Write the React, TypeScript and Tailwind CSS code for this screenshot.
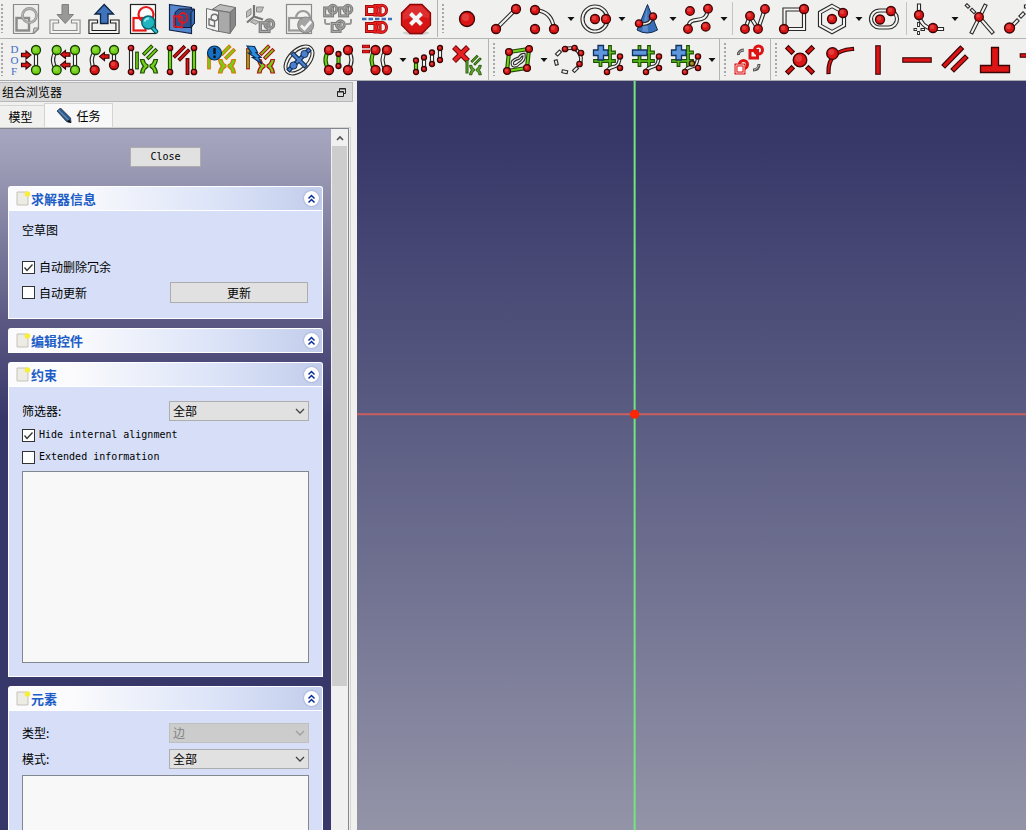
import { useState } from "react"
import type { ReactNode } from "react"

const RED = "#dc1414"
const GREEN = "#73d216"
const WHITE = "#f4f4f2"
const INK = "#2a2a2a"

/* ---------- drawing primitives for the 32x32 toolbar icons ---------- */

function Dot({ x, y, r = 4, c = RED }: { x: number; y: number; r?: number; c?: string }) {
  return (
    <g>
      <circle cx={x} cy={y} r={r} fill={c} stroke={c === GREEN ? "#173d02" : "#3a0505"} strokeWidth="1.3" />
      <circle cx={x - r * 0.2} cy={y - r * 0.25} r={r * 0.5} fill="#fff" opacity="0.18" />
    </g>
  )
}

// a stroke with a thin outline round it
function Bar({ d, c = WHITE, w = 2, o = INK }: { d: string; c?: string; w?: number; o?: string }) {
  return (
    <g fill="none">
      <path d={d} stroke={o} strokeWidth={w + 2.2} strokeLinecap="square" />
      <path d={d} stroke={c} strokeWidth={w} strokeLinecap="square" />
    </g>
  )
}

// small square + ring
function Pair({ x, y, s = 1 }: { x: number; y: number; s?: number }) {
  return (
    <g transform={`translate(${x} ${y}) scale(${s})`} fill="none">
      <g stroke="#7c7c7c" strokeWidth="4.6">
        <rect x="2.5" y="6" width="12" height="12" />
        <circle cx="15" cy="8" r="6" />
      </g>
      <g stroke="#b2b2b2" strokeWidth="1.2">
        <rect x="2.5" y="6" width="12" height="12" />
        <circle cx="15" cy="8" r="6" />
      </g>
    </g>
  )
}

function Arrow({ x, y, flip = false }: { x: number; y: number; flip?: boolean }) {
  return (
    <path
      transform={`translate(${x} ${y})${flip ? " scale(-1 1)" : ""}`}
      d="M-4.5 -1.7H0V-4L5 0L0 4V1.7H-4.5Z"
      fill={RED}
      stroke="#3a0505"
      strokeWidth="1.1"
    />
  )
}

function Marks({ c = GREEN, o = "#1f4d05" }: { c?: string; o?: string }) {
  return (
    <g>
      <Bar d="M17.5 9.5L24 3" c={c} o={o} w={1.6} />
      <Bar d="M21.5 13.5L28.5 6.5" c={c} o={o} w={1.6} />
      <path d="M13.5 15.5H17C17.5 18.5 19 20 21 21V23C19 24 17.5 26 17 29H13.5C14 26 15 23.5 16.500 22.2C15 21 14 18.500 13.5 15.5Z" fill={c} stroke={o} strokeWidth="1.2" />
      <path d="M30.5 15.5H27C26.500 18.500 25 20 23 21V23C25 24 26.500 26 27 29H30.5C30 26 29 23.5 27.5 22.2C29 21 30 18.5 30.5 15.5Z" fill={c} stroke={o} strokeWidth="1.2" />
    </g>
  )
}

function Tray({ c }: { c: string }) {
  return <Bar d="M8 18.5H2.5V29H29.5V18.5H24" o={c} w={2} />
}

function Grid() {
  return (
    <g>
      <Bar d="M8.5 3V21M18 3V21M3 8.5H22M3 17H22" c="#5fc21a" o="#1f4d05" w={1.6} />
      <Bar d="M15 27C20 19 26 28 28 13" w={1.6} />
      <Dot x={28} y={12.5} r={2.6} />
      <Dot x={15} y={28} r={2.6} />
      <Dot x={28} y={24} r={2.6} />
    </g>
  )
}

const BLUE_PLUS = "M6 1.5H11.5V6H16V11.5H11.5V16H6V11.5H1.5V6H6Z"

const icons: Record<string, ReactNode> = {
  newSketch: (
    <g>
      <path d="M3.5 1.5H28.5V26L24 30.5H3.5Z" fill="#eeeeec" stroke="#8a8a8a" strokeWidth="1.2" />
      <path d="M28.5 25L23 30.5L24 25Z" fill="#ccc" stroke="#888" />
      <g fill="none">
        <rect x="6.5" y="15" width="12.5" height="12.5" stroke="#8b8b8b" strokeWidth="2.4" />
        <circle cx="19.5" cy="12.5" r="7" stroke="#999" strokeWidth="2.8" />
        <circle cx="19.5" cy="12.5" r="7" stroke="#c8c8c8" strokeWidth="0.8" />
      </g>
    </g>
  ),
  importFile: (
    <g>
      <Tray c="#8b8b8b" />
      <path d="M13 1.5H19.5V11.5H24.5L16.2 20.5L8 11.5H13Z" fill="#999" stroke="#808080" />
    </g>
  ),
  exportFile: (
    <g>
      <Tray c="#1c1c1c" />
      <path d="M12.5 20.5V11H7L16.2 1.5L25.5 11H20V20.5Z" fill="#3f74bd" stroke="#0d2345" strokeWidth="1.3" />
    </g>
  ),
  viewSketch: (
    <g>
      <rect x="3.5" y="1.5" width="25" height="29" fill="#fafafa" stroke="#222" strokeWidth="1.2" />
      <g fill="none" stroke="#e61818" strokeWidth="2.2">
        <rect x="6.5" y="15" width="12" height="12.5" />
        <circle cx="19" cy="11.5" r="7.5" />
      </g>
      <path d="M25 24L29 28.5" stroke="#064c55" strokeWidth="4.5" strokeLinecap="round" />
      <path d="M25 24L29 28.5" stroke="#22c0ce" strokeWidth="2.4" strokeLinecap="round" />
      <circle cx="21.3" cy="19.5" r="6.5" fill="#21b5c0" stroke="#0a6873" strokeWidth="1.5" />
      <path d="M17.5 18.5A4.5 4.5 0 0 1 22 15.5" stroke="#9cecf0" strokeWidth="1.8" fill="none" />
    </g>
  ),
  viewSection: (
    <g>
      <path d="M3.5 1.5L25.5 4.5V30.5L3.5 27Z" fill="#5686cc" stroke="#10264c" strokeWidth="1.2" />
      <path d="M9 9.5L13 6H28.5V20L25 24.5H9Z" fill="#2c5190" stroke="#0b1b38" />
      <path d="M25 9.5L28.5 6V20L25 24.5Z" fill="#3c6fb8" stroke="#0b1b38" />
      <g fill="none" stroke="#e61818" strokeWidth="1.8">
        <path d="M8 13L16 14V24.5L8 23.5Z" />
        <ellipse cx="17" cy="15" rx="4.3" ry="5" />
      </g>
    </g>
  ),
  mapSketch: (
    <g stroke="#707070">
      <path d="M7 6.5L15 1.5L30.5 4.5L25 9.5Z" fill="#bcbcbc" />
      <path d="M25 9.5L30.5 4.5V22.5L25 30.5Z" fill="#888" />
      <path d="M7 6.5L25 9.5V30.5L7 27Z" fill="#a9a9a9" />
      <path d="M1.5 5.5L13.5 8.5V28.5L1.5 25Z" fill="#f4f4f4" />
      <path d="M4 16L9.500 17.500V23.5L4 22Z" fill="none" strokeWidth="1.4" />
      <circle cx="9.5" cy="14.5" r="3.3" fill="none" strokeWidth="1.4" />
    </g>
  ),
  reorient: (
    <g>
      <path d="M12.5 4H19.5L17.5 9H12.500Z" fill="#bdbdbd" stroke="#8c8c8c" />
      <path d="M2.5 8.5L7 5.5V11.5L2.5 14.5Z" fill="#bdbdbd" stroke="#8c8c8c" />
      <path d="M6.5 19L9.5 16.5L15 18.500L12 21.500Z" fill="#bdbdbd" stroke="#8c8c8c" />
      <path d="M10 2V13.500L3 19.5M10 13.500L19 16.500" stroke="#757575" strokeWidth="2.2" fill="none" />
      <Pair x={14.5} y={15.5} s={0.72} />
    </g>
  ),
  validate: (
    <g>
      <rect x="3.5" y="1.5" width="25" height="29" fill="#f2f2f0" stroke="#8a8a8a" strokeWidth="1.2" />
      <g fill="none" stroke="#999" strokeWidth="2.2">
        <rect x="6" y="15" width="13" height="12.5" />
        <path d="M13 15A7 7 0 1 1 27 15" />
      </g>
      <circle cx="22.7" cy="22" r="8" fill="#a4a4a4" stroke="#848484" />
      <path d="M18 22.500L21.5 26L28 18.5" stroke="#f4f4f4" strokeWidth="2.8" fill="none" />
    </g>
  ),
  merge: (
    <g>
      <Pair x={1} y={1} s={0.66} />
      <Pair x={16} y={1} s={0.66} />
      <Pair x={8.5} y={16.5} s={0.66} />
      <path d="M3 16V19Q3 21 5 21H8M29 16V19Q29 21 27 21H24" stroke="#999" strokeWidth="2" fill="none" />
    </g>
  ),
  mirror: (
    <g fill="none">
      <g stroke="#8d0606" strokeWidth="3">
        <path d="M5.5 3.5H14V11.5H5.5ZM14 2.5H19V12H14ZM5.5 20.5H14V28.500H5.5ZM14 19.5H19V29H14Z" />
        <circle cx="20.5" cy="7.2" r="5" />
        <circle cx="20.5" cy="24.3" r="5" />
      </g>
      <g stroke="#ee2020" strokeWidth="1.7">
        <path d="M5.5 3.5H14V11.5H5.5ZM14 2.5H19V12H14ZM5.5 20.5H14V28.500H5.5ZM14 19.5H19V29H14Z" />
        <circle cx="20.5" cy="7.2" r="5" />
        <circle cx="20.5" cy="24.3" r="5" />
      </g>
      <path d="M1 16H31" stroke="#3f70bd" strokeWidth="2.4" strokeDasharray="4.5 2" />
    </g>
  ),
  stop: (
    <g>
      <ellipse cx="16" cy="30" rx="13" ry="2" fill="#ccc" />
      <path d="M10 1.5H22L30.5 10V22L22 30.5H10L1.5 22V10Z" fill="#d81414" stroke="#8c0808" strokeWidth="1.3" />
      <path d="M10.5 2.8H21.5L29 10.5V15Q16 12 3 17V10.5Z" fill="#fff" opacity="0.12" />
      <path d="M10.5 10.5L21.5 21.5M21.5 10.5L10.5 21.5" stroke="#f7f7f7" strokeWidth="4" />
    </g>
  ),
  point: <Dot x={16} y={16} r={7.5} />,
  line: (
    <g>
      <Bar d="M6 26L26 6" />
      <Dot x={6} y={26} r={4.5} />
      <Dot x={26} y={6} r={4.5} />
    </g>
  ),
  arc: (
    <g>
      <Bar d="M6 7Q23 8 25 26" />
      <Dot x={6} y={7} r={4.5} />
      <Dot x={25} y={26} r={4.5} />
      <Dot x={6} y={26} r={4.5} />
    </g>
  ),
  circle: (
    <g>
      <g fill="none">
        <circle cx="15" cy="16" r="12.5" stroke={INK} strokeWidth="4.2" />
        <circle cx="15" cy="16" r="12.5" stroke={WHITE} strokeWidth="2" />
      </g>
      <Dot x={15} y={16} r={4.5} />
      <Dot x={26} y={16} r={4.5} />
    </g>
  ),
  conic: (
    <g>
      <path d="M16.5 1.5L26.5 27Q16 33 6 27Z" fill="#396eb8" stroke="#112b50" />
      <path d="M16 4L17 29L11 28.5Z" fill="#8fb4e4" opacity="0.45" />
      <Bar d="M9 21Q20 22 21 14" w={1.6} />
      <Dot x={8} y={20.5} r={3.6} />
      <Dot x={22} y={13.5} r={3.6} />
    </g>
  ),
  bspline: (
    <g>
      <Bar d="M6 26C7 9 24 25 26 6" />
      <Dot x={8} y={8} r={4.3} />
      <Dot x={26} y={5.7} r={4.3} />
      <Dot x={6} y={26} r={4.3} />
      <Dot x={23.7} y={23.7} r={4.3} />
    </g>
  ),
  polyline: (
    <g>
      <Bar d="M6 26L11 13L19 26L26 6" />
      <Dot x={6} y={26} r={4.3} />
      <Dot x={11} y={13} r={4.3} />
      <Dot x={19} y={26} r={4.3} />
      <Dot x={26} y={6} r={4.3} />
    </g>
  ),
  rect: (
    <g>
      <Bar d="M6.5 6.5H26V26H6.5Z" />
      <Dot x={26} y={6} r={4.5} />
      <Dot x={6} y={26} r={4.5} />
    </g>
  ),
  polygon: (
    <g>
      <Bar d="M15 3L27 9.5V22.5L15 29L3 22.5V9.5Z" />
      <Dot x={15} y={16} r={4.5} />
      <Dot x={26} y={10} r={4.5} />
    </g>
  ),
  slot: (
    <g>
      <g fill="none">
        <rect x="3" y="7.5" width="26" height="17" rx="8.5" stroke={INK} strokeWidth="4.2" />
        <rect x="3" y="7.5" width="26" height="17" rx="8.5" stroke={WHITE} strokeWidth="2" />
      </g>
      <Dot x={12} y={16.5} r={4.5} />
      <Dot x={23} y={8} r={4.5} />
    </g>
  ),
  fillet: (
    <g>
      <Bar d="M6 2.5V12Q8 24 20 26H29" />
      <g fill="none">
        <path d="M5.5 19V24M5.5 28V32M0.5 26.500H4M7.5 26.5H12" stroke={INK} strokeWidth="2.8" />
        <path d="M5.5 20V23M5.5 29V31M1.5 26.5H3.500M8.5 26.5H11" stroke="#f4f4f2" strokeWidth="1" />
      </g>
      <Dot x={6} y={12} r={4.5} />
      <Dot x={20} y={25} r={4.5} />
    </g>
  ),
  trim: (
    <g>
      <Bar d="M21 3L8 29" />
      <Bar d="M15 14L28 29" />
      <Bar d="M3 2.5L4 3.5M8 7L10 9" w={1.5} />
      <Dot x={15} y={14} r={4.3} />
    </g>
  ),
  extend: (
    <g>
      <Bar d="M7 25L14 18M18 13L20 11M23 3.5H28" />
      <Dot x={6.5} y={25} r={5} />
    </g>
  ),
  dof: (
    <g>
      <g fill="#3f6fc8" fontFamily="Liberation Serif, serif" fontSize="11">
        <text x="0.5" y="9">D</text>
        <text x="0.5" y="19.5">O</text>
        <text x="1" y="30.5">F</text>
      </g>
      <Bar d="M26 6V26" />
      <Arrow x={16} y={11} />
      <Arrow x={16} y={21} />
      <Dot x={26} y={6} r={4.5} c={GREEN} />
      <Dot x={26} y={26} r={4.5} c={GREEN} />
    </g>
  ),
  coincidentPairs: (
    <g>
      <Bar d="M8 6Q0 16 8 26" />
      <Bar d="M26 6V26" />
      <Arrow x={16.5} y={10.5} flip />
      <Arrow x={16.5} y={21} flip />
      <Dot x={7.7} y={6} r={4.5} c={GREEN} />
      <Dot x={26} y={6} r={4.5} c={GREEN} />
      <Dot x={7.7} y={26} r={4.5} c={GREEN} />
      <Dot x={26} y={26} r={4.5} c={GREEN} />
    </g>
  ),
  redundantPairs: (
    <g>
      <Bar d="M8 6Q0 16 7 26" />
      <Bar d="M26 6V21" />
      <Arrow x={16.5} y={12.5} flip />
      <Dot x={7.7} y={6} r={4.5} c={GREEN} />
      <Dot x={26} y={6} r={4.5} c={GREEN} />
      <Dot x={26} y={21} r={4.5} />
      <Dot x={6.7} y={26} r={4.5} />
    </g>
  ),
  selectConstraints: (
    <g>
      <Bar d="M4 4V28" />
      <Bar d="M10 9.500V23.5" c={GREEN} o="#1f4d05" w={1.6} />
      <Marks />
      <Dot x={4} y={4} r={2.7} />
      <Dot x={4} y={28} r={2.7} />
    </g>
  ),
  selectElements: (
    <g>
      <Bar d="M4 4V28M28 4V28" c={GREEN} o="#1f4d05" />
      <Bar d="M9 12L17.500 3.5M14 15L22 7M21.5 16V29" c={RED} o="#5c0505" w={1.6} />
      <Dot x={4} y={4} r={2.7} />
      <Dot x={28} y={4} r={2.7} />
      <Dot x={4} y={28} r={2.7} />
      <Dot x={28} y={28} r={2.7} />
    </g>
  ),
  selectRedundant: (
    <g>
      <Bar d="M4 12V23.500" c={GREEN} o="#d87808" w={1.6} />
      <Marks o="#d87808" />
      <circle cx="9.5" cy="9" r="7" fill="#1470c4" stroke="#0b2c50" strokeWidth="1.2" />
      <path d="M9.5 4V10M9.5 11.5V14" stroke="#111" strokeWidth="2.4" />
    </g>
  ),
  selectConflicting: (
    <g>
      <Bar d="M4 6V23.500" c={GREEN} o="#a81616" w={1.6} />
      <Marks o="#b41414" />
      <path d="M3 2L10.5 2.500L13.5 8.500H12L17 13.500H14.5L18 20L8.5 13.5H11L4.5 9H7.5Z" fill="#2a8de0" stroke="#0c2c58" strokeWidth="1.2" />
    </g>
  ),
  internalGeometry: (
    <g>
      <g transform="rotate(-45 16 16)" fill="none">
        <ellipse cx="16" cy="16" rx="16.5" ry="9.5" stroke={INK} strokeWidth="4" />
        <ellipse cx="16" cy="16" rx="16.5" ry="9.5" stroke={WHITE} strokeWidth="1.8" />
      </g>
      <Bar d="M6.500 25.500L25.500 6.5M10.5 10.5L21.5 21.5" c="#4b80cc" o="#12305c" w={2.4} />
      <circle cx="21.500" cy="10" r="3.600" fill="#4b80cc" stroke="#12305c" />
      <circle cx="10.500" cy="21.500" r="3.600" fill="#4b80cc" stroke="#12305c" />
    </g>
  ),
  symmetry: (
    <g>
      <Bar d="M7 6Q0 16 7 26" c={GREEN} o="#1f4d05" />
      <Bar d="M26 6Q33 16 26 26" />
      <Bar d="M16.5 10V22" c={GREEN} o="#1f4d05" />
      <Dot x={7} y={6} r={4.5} />
      <Dot x={26} y={6} r={4.5} />
      <Dot x={7} y={26} r={4.5} />
      <Dot x={26} y={26} r={4.5} />
      <Dot x={16.5} y={10} r={2.5} />
      <Dot x={16.5} y={22} r={2.5} />
    </g>
  ),
  clone: (
    <g>
      <path d="M1 2.5H9M1 7.5H9" stroke="#8c0808" strokeWidth="3.6" />
      <path d="M2 2.5H8M2 7.5H8" stroke="#e61818" strokeWidth="1.8" />
      <Bar d="M14 6Q7 16 14 26" c={GREEN} o="#1f4d05" />
      <Bar d="M25 6Q18 16 25 26" />
      <Dot x={14.5} y={6} r={4.5} />
      <Dot x={26} y={6} r={4.5} />
      <Dot x={14.5} y={26} r={4.5} />
      <Dot x={26} y={26} r={4.5} />
    </g>
  ),
  rectArray: (
    <g>
      <Bar d="M4 17V28" c={GREEN} o="#1f4d05" />
      <Bar d="M12 14V25M20 9V20M28 4V16" />
      {[[4, 16.5], [4, 28], [12, 13.5], [12, 25], [20, 8.5], [20, 20], [28, 4], [28, 16]].map(([x, y]) => (
        <Dot key={`${x}-${y}`} x={x} y={y} r={2.5} />
      ))}
    </g>
  ),
  removeAxes: (
    <g>
      <path d="M3 3L17 17M17 3L3 17" stroke="#6e0505" strokeWidth="5.5" />
      <path d="M3.5 3.5L16.5 16.5M16.5 3.5L3.5 16.5" stroke="#e62222" strokeWidth="3.5" />
      <g transform="translate(9 10.5) scale(0.7)">
        <Bar d="M10 10V25" c="#5aa02c" o="#1f4d05" />
        <Marks c="#5aa02c" />
      </g>
    </g>
  ),
  bsplineDegree: (
    <g>
      <Bar d="M7 8L27 5L25 24L5 27Z" c={GREEN} o="#1f4d05" w={2} />
      <Bar d="M11 21.500Q8 16.500 17 14Q19 10.500 22 10.500Q23 16.500 17 19.500Q14 23 11 21.5Z" w={1.2} />
      <Dot x={7} y={8} r={3.4} />
      <Dot x={27} y={5} r={3.4} />
      <Dot x={5} y={27} r={3.4} />
      <Dot x={25} y={24} r={3.4} />
    </g>
  ),
  periodic: (
    <g>
      <Bar d="M12 5Q25 1 28 14Q28 18 27 20" w={1.6} />
      <Bar d="M6.5 8L4.5 10M3 17.5L3.5 19.5M10.5 27.5L13 28M21.5 26.500L23.5 24.5" w={1.8} />
      <Dot x={12} y={5} r={2.7} />
      <Dot x={21.5} y={4} r={2.7} />
      <Dot x={28} y={9} r={2.7} />
      <Dot x={26.5} y={20} r={2.7} />
    </g>
  ),
  knotPlus: (
    <g>
      <Grid />
      <path d={BLUE_PLUS} fill="#5c96dd" stroke="#12305c" strokeWidth="1.3" />
    </g>
  ),
  knotMinus: (
    <g>
      <Grid />
      <path d="M1.5 6H16V11.5H1.5Z" fill="#5c96dd" stroke="#12305c" strokeWidth="1.3" />
    </g>
  ),
  knotInsert: (
    <g>
      <Grid />
      <path d={BLUE_PLUS} fill="#5c96dd" stroke="#12305c" strokeWidth="1.3" />
      <Dot x={22} y={19.5} r={2.6} c="#8f8a08" />
    </g>
  ),
  switchVirtual: (
    <g fill="none">
      <path d="M5.5 11Q5 6.500 11 6M20 26Q26 26 26 20" stroke="#555" strokeWidth="3" />
      <path d="M5.5 10Q6 6.500 11 6M21 26Q25 25 26 21" stroke="#bbb" strokeWidth="1" />
      <g stroke="#dc1414" strokeWidth="3">
        <rect x="17" y="6.5" width="7.5" height="7.5" />
        <circle cx="25.5" cy="6" r="4" />
        <circle cx="10.5" cy="20.5" r="4" />
        <rect x="3" y="21" width="8" height="8" fill="#fff" />
      </g>
      <path d="M3 21H11V29H3Z" stroke="#fff" strokeWidth="0.8" />
    </g>
  ),
  coincident: (
    <g>
      <Bar d="M4.5 4.5L7.5 7.5M27.5 4.5L24.5 7.5M4.5 27.5L7.5 24.5M27.5 27.5L24.5 24.5" c={RED} o="#3a0505" w={3} />
      <Dot x={16} y={16} r={6.8} />
    </g>
  ),
  pointOnObject: (
    <g>
      <Bar d="M5.5 28Q5 7 29 5" c={RED} o="#3a0505" w={2} />
      <Dot x={9.5} y={9.5} r={5.8} />
    </g>
  ),
  vertical: <Bar d="M16 4V28" c={RED} o="#3a0505" w={3.4} />,
  horizontal: <Bar d="M4 16H28" c={RED} o="#3a0505" w={3.4} />,
  parallel: <Bar d="M5 21L20.5 5M14 25L25 14" c={RED} o="#3a0505" w={3.2} />,
  perpendicular: (
    <path d="M12.5 3.5H19.5V21.5H30.5V28.5H1.5V21.5H12.5Z" fill={RED} stroke="#3a0505" strokeWidth="1.3" />
  ),
  tangent: <Bar d="M4 11.5H28" c={RED} o="#3a0505" w={2.4} />,
}

// "v" is a drop-down arrow, "|" a thin divider
const editTools = [
  "newSketch", "importFile", "exportFile", "viewSketch", "viewSection", "mapSketch",
  "reorient", "validate", "merge", "mirror", "stop",
]
const geometryTools = [
  "point", "line", "arc", "v", "circle", "v", "conic", "v", "bspline", "v", "|",
  "polyline", "rect", "polygon", "v", "slot", "|", "fillet", "v", "trim", "extend",
]
const selectTools = [
  "dof", "coincidentPairs", "redundantPairs", "selectConstraints", "selectElements", "selectRedundant",
  "selectConflicting", "internalGeometry", "symmetry", "clone", "v", "rectArray", "removeAxes",
]
const splineTools = ["bsplineDegree", "v", "periodic", "knotPlus", "knotMinus", "knotInsert", "v"]
const virtualTools = ["switchVirtual"]
const constraintTools = [
  "coincident", "pointOnObject", "vertical", "horizontal", "parallel", "perpendicular", "tangent",
]

function Toolbar({ items, last = false }: { items: string[]; last?: boolean }) {
  return (
    <div role="toolbar" className={`flex shrink-0 items-stretch ${last ? "" : "mr-[3px] border-r border-[#b4b4b4] pr-px"}`}>
      <div className="w-[7px] py-1 pl-px">
        <div className="h-full w-[2px] bg-[repeating-linear-gradient(to_bottom,#a8a8a8_0px,#a8a8a8_2px,transparent_2px,transparent_4px)]" />
      </div>
      {items.map((item, i) => {
        if (item === "|") {
          return (
            <div key={i} className="w-[6px] py-[2px] pl-[2px]">
              <div className="h-full w-px bg-[#c4c4c4]" />
            </div>
          )
        }
        if (item === "v") {
          return (
            <button key={i} aria-label="more" className="flex w-3 items-center justify-center">
              <svg width="8" height="4" viewBox="0 0 8 4">
                <path d="M0.5 0H7.5L4 4Z" fill="#111" />
              </svg>
            </button>
          )
        }
        return (
          <button key={i} aria-label={item} className="flex w-[39px] items-center pl-[3px]">
            <svg width="32" height="32" viewBox="0 0 32 32" className="shrink-0">
              {icons[item]}
            </svg>
          </button>
        )
      })}
    </div>
  )
}

function TaskBox({ title, children }: { title: string; children?: ReactNode }) {
  return (
    <section className="shrink-0">
      <h2 className="flex h-6 items-center rounded-t-[3px] border border-b-0 border-white bg-linear-to-r from-[#fbfbfd] from-20% via-[#dce4f8] via-65% to-[#c2cdeb] pl-[7px] pr-[3px]">
        <svg width="15" height="15" viewBox="0 0 15 15" className="shrink-0">
          <path d="M1 1H12V14H1Z" fill="#ecebe4" stroke="#c4c3ba" />
          <circle cx="11.500" cy="3" r="2.8" fill="#f7ee3a" />
        </svg>
        <span className="flex-1 text-[13px] font-bold leading-5 text-[#215dc6]">{title}</span>
        <button aria-label={title} className="flex size-[15px] items-center justify-center rounded-full bg-white shadow-[0_0_2px_#7d8bb8]">
          <svg width="9" height="10" viewBox="0 0 9 10" fill="none" stroke="#0b2f9c" strokeWidth="1.5">
            <path d="M1.5 4.5L4.5 1.5L7.5 4.5M1.5 8.5L4.5 5.5L7.5 8.5" />
          </svg>
        </button>
      </h2>
      {children ? (
        <div className="border border-white bg-[#d6dff7] px-[13px]">{children}</div>
      ) : (
        <div className="h-px bg-white" />
      )}
    </section>
  )
}

function Check({ id, label, checked: initial = false, mono = false }: { id: string; label: string; checked?: boolean; mono?: boolean }) {
  const [checked, setChecked] = useState(initial)
  return (
    <div className="flex h-5 items-center gap-1">
      <span className="grid">
        <input
          id={id}
          type="checkbox"
          checked={checked}
          onChange={(e) => setChecked(e.target.checked)}
          className="col-start-1 row-start-1 size-[13px] appearance-none border border-[#333] bg-white"
        />
        {checked && (
          <svg width="13" height="13" viewBox="0 0 13 13" className="pointer-events-none col-start-1 row-start-1">
            <path d="M2.5 6.5L5 9.5L10.5 3.5" fill="none" stroke="#333" strokeWidth="1.3" />
          </svg>
        )}
      </span>
      <label htmlFor={id} className={mono ? "font-['DejaVu_Sans_Mono',monospace] text-[10px] leading-4" : ""}>
        {label}
      </label>
    </div>
  )
}

function SelectRow({ id, label, value, disabled = false }: { id: string; label: string; value: string; disabled?: boolean }) {
  return (
    <div className="flex h-5 items-center">
      <label htmlFor={id} className="flex-1">
        {label}
      </label>
      <div className="grid w-[140px] items-center">
        <select
          id={id}
          disabled={disabled}
          className={`col-start-1 row-start-1 h-5 appearance-none border pl-[3px] leading-4 ${
            disabled ? "border-[#bfbfbf] bg-[#cccccc] text-[#838383] opacity-100" : "border-[#adadad] bg-[#e1e1e1] text-black"
          }`}
        >
          <option>{value}</option>
        </select>
        <svg width="10" height="6" viewBox="0 0 10 6" className="pointer-events-none col-start-1 row-start-1 mr-1 justify-self-end">
          <path d="M1 1L5 5L9 1" fill="none" stroke={disabled ? "#a0a0a0" : "#444"} strokeWidth="1.3" />
        </svg>
      </div>
    </div>
  )
}

function SidePanel() {
  return (
    <aside className="flex w-[357px] shrink-0 flex-col bg-[#f0f0ee] pt-px">
      <div className="mr-1 flex h-5 items-center justify-between border border-l-0 border-[#b8b8b8] bg-[#d9d9d9] pl-[2px] pr-[6px]">
        <span>组合浏览器</span>
        <button aria-label="float">
          <svg width="9" height="9" viewBox="0 0 9 9" fill="none" stroke="#222">
            <path d="M2.5 3V0.5H8.5V5.5H6.5M2.5 1H8.5" />
            <path d="M0.5 3.5H6.5V8.5H0.5ZM0.5 4H6.5" />
          </svg>
        </button>
      </div>

      <div role="tablist" className="flex items-end pt-px">
        <button role="tab" aria-selected="false" className="h-[22px] w-11 border-t border-[#d4d4d4] pr-[3px] leading-5">
          模型
        </button>
        <button role="tab" aria-selected="true" className="flex h-6 w-[69px] items-center justify-center gap-1 border-x border-t border-[#d4d4d4] bg-[#f8f8f8]">
          <svg width="16" height="16" viewBox="0 0 16 16">
            <path d="M1 3L4.5 0L14.500 10L15 14.5L10.500 13.5Z" fill="#2f5785" stroke="#1a2f4a" strokeWidth="0.8" />
            <path d="M2.5 2L12.5 12" stroke="#5f8cbd" strokeWidth="1.2" />
            <path d="M13 11.500L15.500 15L11 14Z" fill="#111" />
          </svg>
          任务
        </button>
      </div>

      <div className="mr-[6px] flex min-h-0 flex-1 border-r border-t border-[#d4d4d4] pr-px">
        <div className="flex min-h-0 flex-1 border-r border-t border-[#828790]">
          <div className="flex min-w-0 flex-1 flex-col gap-[9px] overflow-hidden bg-[linear-gradient(to_bottom,#a6a6c1_0px,#9c9cb6_35px,#5c5a84_190px,#38376a_290px)] px-2 pt-[18px]">
            <button className="mb-[10px] h-5 w-[71px] shrink-0 self-center border border-[#adadad] bg-[#e1e1e1] font-['DejaVu_Sans_Mono',monospace] text-[10px] leading-4">
              Close
            </button>

            <TaskBox title="求解器信息">
              <div className="pb-[15px] pt-[9px]">
                <p className="leading-5">空草图</p>
                <div className="pt-[17px]">
                  <Check id="auto-remove" label="自动删除冗余" checked />
                </div>
                <div className="flex items-center justify-between pt-[5px]">
                  <Check id="auto-update" label="自动更新" />
                  <button className="mr-px h-[21px] w-[138px] border border-[#adadad] bg-[#e1e1e1] leading-4">更新</button>
                </div>
              </div>
            </TaskBox>

            <TaskBox title="编辑控件" />

            <TaskBox title="约束">
              <div className="pb-[13px] pt-[14px]">
                <SelectRow id="filter" label="筛选器:" value="全部" />
                <div className="flex flex-col gap-[2px] py-1">
                  <Check id="hide-internal" label="Hide internal alignment" checked mono />
                  <Check id="extended" label="Extended information" mono />
                </div>
                <div role="listbox" aria-label="约束" className="h-48 border border-[#828790] bg-[#f8f8f8]" />
              </div>
            </TaskBox>

            <TaskBox title="元素">
              <div className="flex flex-col gap-[6px] pt-3">
                <SelectRow id="type" label="类型:" value="边" disabled />
                <SelectRow id="mode" label="模式:" value="全部" />
                <div role="listbox" aria-label="元素" className="h-48 border border-[#828790] bg-[#f8f8f8]" />
              </div>
            </TaskBox>
          </div>

          <div className="flex w-[17px] shrink-0 flex-col bg-[#f0f0f0] px-px">
            <button aria-label="up" className="flex h-[17px] items-center justify-center">
              <svg width="8" height="6" viewBox="0 0 8 6">
                <path d="M1 5L4 2L7 5" fill="none" stroke="#505050" strokeWidth="1.6" />
              </svg>
            </button>
            <div className="min-h-0 flex-1">
              <div className="h-[79%] bg-[#cdcdcd]" />
            </div>
          </div>
        </div>
      </div>
    </aside>
  )
}

function Viewport() {
  return (
    <main className="min-w-0 flex-1 bg-linear-to-b from-[#363667] from-6% to-[#9494a8]">
      <svg className="block size-full">
        <line x1="0" x2="100%" y1="44.5%" y2="44.5%" stroke="#c8605f" strokeWidth="2" />
        <line x1="41.5%" x2="41.5%" y1="0" y2="100%" stroke="#72e67e" strokeWidth="2" />
        <circle cx="41.5%" cy="44.5%" r="4.5" fill="#ff2600" />
      </svg>
    </main>
  )
}

export default function App() {
  return (
    <div className="flex h-screen flex-col overflow-hidden bg-[#f0f0ee] font-['Noto_Sans_CJK_SC',sans-serif] text-xs text-black">
      <header className="shrink-0">
        <div className="flex overflow-hidden border-b border-[#b4b4b4] pb-px">
          <div className="flex h-[37px]">
            <Toolbar items={editTools} />
            <Toolbar items={geometryTools} last />
          </div>
        </div>
        <div className="flex overflow-hidden border-b border-[#a8a8b0]">
          <div className="flex h-[41px]">
            <Toolbar items={selectTools} />
            <Toolbar items={splineTools} />
            <Toolbar items={virtualTools} />
            <Toolbar items={constraintTools} last />
          </div>
        </div>
      </header>
      <div className="flex min-h-0 flex-1">
        <SidePanel />
        <Viewport />
      </div>
    </div>
  )
}
